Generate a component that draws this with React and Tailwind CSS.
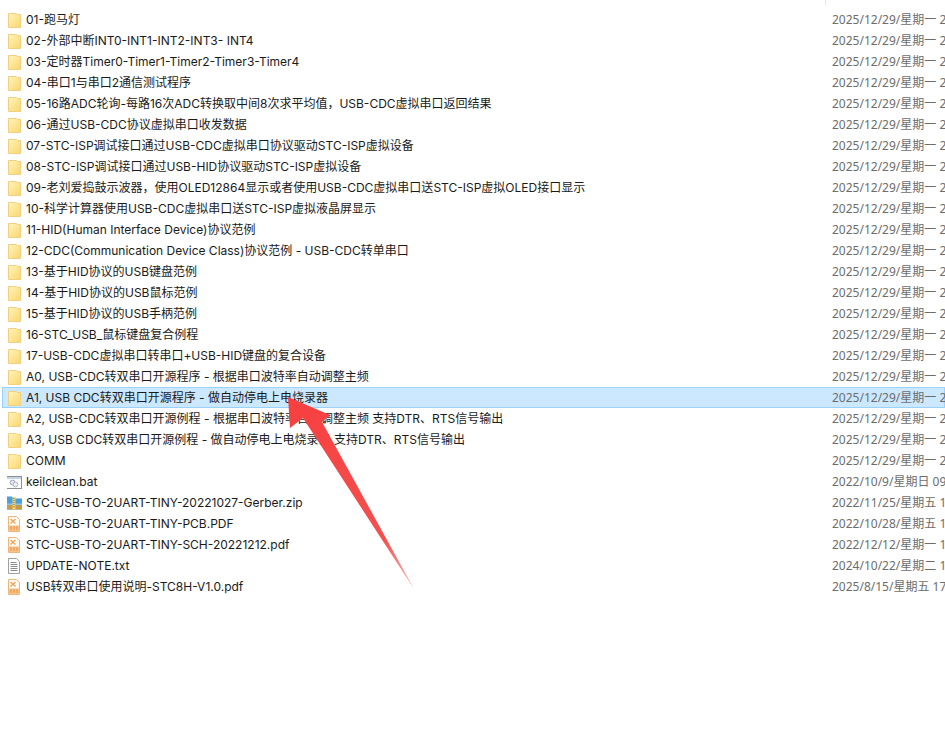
const folders = [
  "01-跑马灯",
  "02-外部中断INT0-INT1-INT2-INT3- INT4",
  "03-定时器Timer0-Timer1-Timer2-Timer3-Timer4",
  "04-串口1与串口2通信测试程序",
  "05-16路ADC轮询-每路16次ADC转换取中间8次求平均值，USB-CDC虚拟串口返回结果",
  "06-通过USB-CDC协议虚拟串口收发数据",
  "07-STC-ISP调试接口通过USB-CDC虚拟串口协议驱动STC-ISP虚拟设备",
  "08-STC-ISP调试接口通过USB-HID协议驱动STC-ISP虚拟设备",
  "09-老刘爱捣鼓示波器，使用OLED12864显示或者使用USB-CDC虚拟串口送STC-ISP虚拟OLED接口显示",
  "10-科学计算器使用USB-CDC虚拟串口送STC-ISP虚拟液晶屏显示",
  "11-HID(Human Interface Device)协议范例",
  "12-CDC(Communication Device Class)协议范例 - USB-CDC转单串口",
  "13-基于HID协议的USB键盘范例",
  "14-基于HID协议的USB鼠标范例",
  "15-基于HID协议的USB手柄范例",
  "16-STC_USB_鼠标键盘复合例程",
  "17-USB-CDC虚拟串口转串口+USB-HID键盘的复合设备",
  "A0, USB-CDC转双串口开源程序 - 根据串口波特率自动调整主频",
  "A1, USB CDC转双串口开源程序 - 做自动停电上电烧录器",
  "A2, USB-CDC转双串口开源例程 - 根据串口波特率自动调整主频 支持DTR、RTS信号输出",
  "A3, USB CDC转双串口开源例程 - 做自动停电上电烧录器 支持DTR、RTS信号输出",
  "COMM",
];

const files = [
  { name: "keilclean.bat", date: "2022/10/9/星期日 09:12", type: "bat" },
  { name: "STC-USB-TO-2UART-TINY-20221027-Gerber.zip", date: "2022/11/25/星期五 10:20", type: "zip" },
  { name: "STC-USB-TO-2UART-TINY-PCB.PDF", date: "2022/10/28/星期五 11:05", type: "pdf" },
  { name: "STC-USB-TO-2UART-TINY-SCH-20221212.pdf", date: "2022/12/12/星期一 11:30", type: "pdf" },
  { name: "UPDATE-NOTE.txt", date: "2024/10/22/星期二 11:18", type: "txt" },
  { name: "USB转双串口使用说明-STC8H-V1.0.pdf", date: "2025/8/15/星期五 17:40", type: "pdf" },
];

function FolderIcon() {
  return (
    <svg width="16" height="16" viewBox="0 0 16 16" className="shrink-0">
      <defs>
        <linearGradient id="folder" x1="0" y1="0" x2="1" y2="1">
          <stop offset="0" stopColor="#fff3bd" />
          <stop offset="1" stopColor="#fbd76c" />
        </linearGradient>
      </defs>
      <path d="M1.5 1.5h8l1 1h3v13h-12z" fill="url(#folder)" stroke="#f0d080" />
      <path d="M10 15.5v-4l3.5-1" fill="none" stroke="#f6dc8f" />
    </svg>
  );
}

function BatIcon() {
  return (
    <svg width="16" height="16" viewBox="0 0 16 16" className="-ml-px mr-px shrink-0">
      <rect x="0.5" y="2.5" width="15" height="12" fill="#fff" stroke="#8e8e8e" />
      <rect x="1" y="3" width="14" height="2" fill="#c4d4e6" />
      <circle cx="6.5" cy="8.5" r="2.4" fill="#e4e8ec" stroke="#9aa6b2" />
      <circle cx="9.5" cy="10.5" r="2.4" fill="#eef0f3" stroke="#aeb6c0" />
    </svg>
  );
}

function ZipIcon() {
  return (
    <svg width="16" height="16" viewBox="0 0 16 16" className="-ml-px mr-px shrink-0">
      <path d="M0 1.5h6l1.5 2H16v11H0z" fill="#4a9fe0" />
      <path d="M0 10h16v4.5H0z" fill="#c59a48" />
      <path d="M0 8.5h16V10H0z" fill="#86c6f0" />
      <rect x="6.5" y="2" width="3" height="12.5" fill="#f1cf72" />
      <path d="M8 3v10" stroke="#8a7436" strokeDasharray="1 1" />
    </svg>
  );
}

function PdfIcon() {
  return (
    <svg width="16" height="16" viewBox="0 0 16 16" className="shrink-0">
      <path d="M1.5 0.5h8l3 3v12h-11z" fill="#fffaf2" stroke="#ecb67a" />
      <path d="M3.5 3l5 4.5M8.5 3l-5 4.5" stroke="#eda55f" strokeWidth="1.4" />
      <rect x="2" y="9.5" width="10" height="5.5" fill="#f8c48c" />
      <path d="M3 11h8M3 13h8" stroke="#e8913f" strokeWidth="1" strokeDasharray="2 1" />
    </svg>
  );
}

function TxtIcon() {
  return (
    <svg width="16" height="16" viewBox="0 0 16 16" className="shrink-0">
      <path d="M1.5 0.5h8l3 3v12h-11z" fill="#fff" stroke="#a0a0a0" />
      <path d="M3.5 4.5h6M3.5 6.5h7M3.5 8.5h7M3.5 10.5h7M3.5 12.5h7" stroke="#8a8a8a" />
    </svg>
  );
}

const fileIcons = { bat: BatIcon, zip: ZipIcon, pdf: PdfIcon, txt: TxtIcon };

function Row({ name, date, icon: Icon, selected }) {
  return (
    <div
      className={`flex h-[21px] items-center border pl-[4px] ${
        selected ? "border-[#99d1ff] bg-[#cce8ff]" : "border-transparent"
      }`}
    >
      <div className="flex w-[825px] shrink-0 items-center gap-[3px] overflow-hidden">
        <Icon />
        <span className="whitespace-nowrap font-['Inter','Noto_Sans_CJK_SC',sans-serif] text-[#1a1a1a]">{name}</span>
      </div>
      <span className="whitespace-nowrap text-[#6d6d6d]">{date}</span>
    </div>
  );
}

export default function App() {
  return (
    <div className="relative h-[731px] w-[945px] overflow-hidden bg-white pl-[2px] pt-[9px] font-['Noto_Sans','Noto_Sans_CJK_SC',sans-serif] text-[12px]">
      <div className="absolute left-[825px] top-0 h-[5px] w-px bg-[#e5e5e5]" />
      {folders.map((name, i) => (
        <Row key={name} name={name} date="2025/12/29/星期一 20:15" icon={FolderIcon} selected={i === 18} />
      ))}
      {files.map((file) => (
        <Row key={file.name} name={file.name} date={file.date} icon={fileIcons[file.type]} />
      ))}
      <svg className="absolute left-0 top-0" width="945" height="731" viewBox="0 0 945 731">
        <defs>
          <linearGradient id="arrow" x1="288" y1="397" x2="413" y2="588" gradientUnits="userSpaceOnUse">
            <stop offset="0" stopColor="#f73f3f" />
            <stop offset="0.75" stopColor="#f45050" />
            <stop offset="1" stopColor="#fbb4b4" />
          </linearGradient>
        </defs>
        <path d="M288 397L330 415L322 422L414 589L303 418L290 428Z" fill="url(#arrow)" />
      </svg>
    </div>
  );
}
